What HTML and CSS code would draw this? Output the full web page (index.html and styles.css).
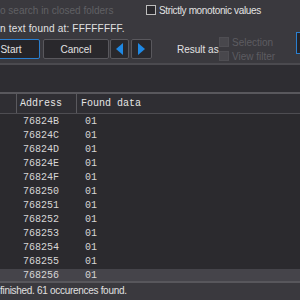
FILE: index.html
```html
<!DOCTYPE html>
<html lang="en">
<head>
    <meta charset="UTF-8">
    <title>Search results</title>
    <link rel="stylesheet" href="styles.css">
</head>
<body>
    <div class="options">
        <div class="line-top">
            <span class="muted">o search in closed folders</span>
            <label class="check tight"><span class="box"></span>Strictly monotonic values</label>
        </div>
        <div class="line-lower">
            <div class="left-col">
                <div class="found">n text found at: FFFFFFFF.</div>
                <div class="buttons">
                    <button class="btn btn-start">Start</button>
                    <button class="btn btn-cancel">Cancel</button>
                    <button class="btn btn-prev">
                        <svg width="7" height="12" viewBox="0 0 7 12"><polygon points="7,0 7,12 0,6" fill="#1f88e3"/></svg>
                    </button>
                    <button class="btn btn-next">
                        <svg width="7" height="12" viewBox="0 0 7 12"><polygon points="0,0 0,12 7,6" fill="#1f88e3"/></svg>
                    </button>
                </div>
            </div>
            <div class="result">
                <span class="result-label">Result as</span>
                <div class="result-opts">
                    <label class="check disabled"><span class="box"></span>Selection</label>
                    <label class="check disabled"><span class="box"></span>View filter</label>
                </div>
            </div>
            <div class="edge-btn"></div>
        </div>
    </div>

    <div class="toolbar"></div>

    <div class="results">
        <div class="head">
            <div class="col-idx"></div>
            <div class="col-addr">Address</div>
            <div class="col-data">Found data</div>
        </div>
        <div class="rows" id="rows"></div>
    </div>

    <div class="status">finished. 61 occurences found.</div>

    <script>
        const rows = document.getElementById('rows');
        const addresses = ['76824B', '76824C', '76824D', '76824E', '76824F', '768250',
            '768251', '768252', '768253', '768254', '768255', '768256'];

        addresses.forEach((addr, i) => {
            const row = document.createElement('div');
            row.className = 'row' + (i === addresses.length - 1 ? ' selected' : '');
            row.innerHTML = '<div class="col-idx"></div>' +
                '<div class="col-addr">' + addr + '</div>' +
                '<div class="col-data">01</div>';
            rows.appendChild(row);
        });
    </script>
</body>
</html>
```

FILE: styles.css
```css
body {
    margin: 0;
    width: 300px;
    height: 300px;
    overflow: hidden;
    background-color: #2b2a2e;
    font-family: "Liberation Sans", Arial, sans-serif;
    font-size: 10px;
    color: #e2e2e2;
}
.options {
    height: 63px;
    background: #3a393e;
    border-bottom: 2px solid #4b4a4f;
}
.line-top {
    display: grid;
    grid-template-columns: 146px auto;
    height: 20px;
    align-items: center;
}
.muted {
    color: #606064;
}
.check {
    display: flex;
    align-items: center;
    gap: 3px;
}
.check.tight {
    letter-spacing: -0.35px;
}
.check .box {
    width: 8px;
    height: 8px;
    border: 1px solid #bdbdbd;
    background: #2a292d;
}
.check.disabled {
    color: #5d5c61;
    height: 14px;
}
.check.disabled .box {
    border-color: #4f4e53;
    background: #48474c;
}
.line-lower {
    display: flex;
    height: 43px;
}
.left-col {
    width: 152px;
    flex-shrink: 0;
}
.found {
    height: 18px;
    line-height: 18px;
    letter-spacing: 0.2px;
}
.buttons {
    display: flex;
    margin-top: 1px;
}
.btn {
    height: 20px;
    padding: 0;
    background: #29282c;
    border: 1px solid #59585d;
    border-radius: 2px;
    color: #e2e2e2;
    font-family: inherit;
    font-size: 10px;
    display: flex;
    align-items: center;
    justify-content: center;
    flex-shrink: 0;
}
.btn-start {
    width: 58px;
    margin-left: -18px;
    border-color: #2a7fd0;
    background: #252428;
}
.btn-cancel {
    width: 66px;
    margin-left: 3px;
}
.btn-prev {
    width: 19px;
    margin-left: 1px;
}
.btn-next {
    width: 21px;
    margin-left: 2px;
}
.result {
    display: flex;
    align-items: center;
    margin-left: 25px;
    margin-top: 15px;
    height: 28px;
}
.result-label {
    width: 42px;
}
.edge-btn {
    margin-left: auto;
    margin-top: 12px;
    width: 3px;
    height: 20px;
    border: 1px solid #2a7fd0;
    border-right: none;
    background: #252428;
}
.toolbar {
    height: 27px;
    background: #2e2d32;
    border-bottom: 2px solid #59585d;
}
.results {
    height: 187px;
    overflow: hidden;
    font-family: "Liberation Mono", monospace;
    font-size: 10px;
}
.head {
    display: grid;
    grid-template-columns: 17px 60px 1fr;
    height: 19px;
    background: #2f2e33;
    border-bottom: 1px solid #4e4d52;
    color: #e4e4e4;
}
.head > div {
    line-height: 19px;
}
.head .col-idx,
.head .col-addr {
    border-right: 1px solid #5a595e;
}
.head .col-addr {
    padding-left: 3px;
}
.head .col-data {
    padding-left: 4px;
}
.rows {
    padding-top: 1px;
}
.row {
    display: grid;
    grid-template-columns: 18px 61px 1fr;
    height: 14px;
    line-height: 14px;
    color: #d6d6d6;
}
.row .col-addr {
    padding-left: 5px;
}
.row .col-data {
    padding-left: 6px;
}
.row.selected {
    background: #45444a;
}
.status {
    height: 17px;
    line-height: 16px;
    background: #3a393e;
    border-top: 2px solid #58575c;
    color: #e0e0e0;
    letter-spacing: -0.3px;
}
```
